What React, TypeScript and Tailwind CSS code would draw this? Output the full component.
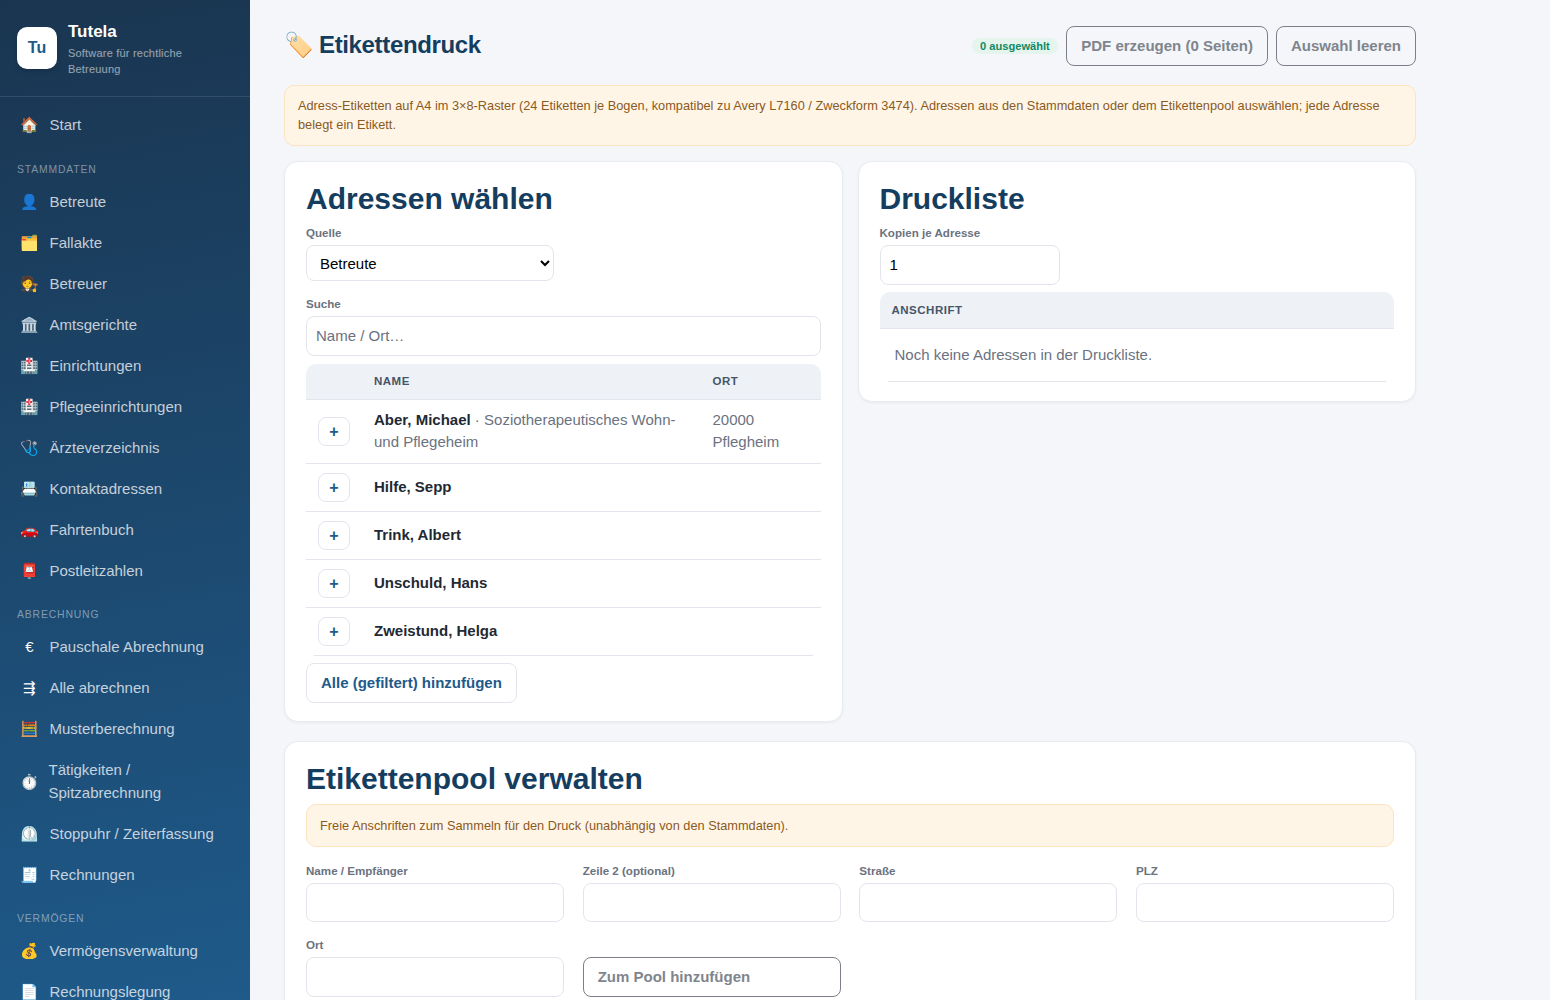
import React from "react";

type NavItem = { icon: string; label: string };
type NavGroup = { title?: string; items: NavItem[] };

const navGroups: NavGroup[] = [
  { items: [{ icon: "🏠", label: "Start" }] },
  {
    title: "Stammdaten",
    items: [
      { icon: "👤", label: "Betreute" },
      { icon: "🗂️", label: "Fallakte" },
      { icon: "🧑‍⚖️", label: "Betreuer" },
      { icon: "🏛️", label: "Amtsgerichte" },
      { icon: "🏥", label: "Einrichtungen" },
      { icon: "🏥", label: "Pflegeeinrichtungen" },
      { icon: "🩺", label: "Ärzteverzeichnis" },
      { icon: "📇", label: "Kontaktadressen" },
      { icon: "🚗", label: "Fahrtenbuch" },
      { icon: "📮", label: "Postleitzahlen" },
    ],
  },
  {
    title: "Abrechnung",
    items: [
      { icon: "€", label: "Pauschale Abrechnung" },
      { icon: "⇶", label: "Alle abrechnen" },
      { icon: "🧮", label: "Musterberechnung" },
      { icon: "⏱️", label: "Tätigkeiten / Spitzabrechnung" },
      { icon: "⏲️", label: "Stoppuhr / Zeiterfassung" },
      { icon: "🧾", label: "Rechnungen" },
    ],
  },
  {
    title: "Vermögen",
    items: [
      { icon: "💰", label: "Vermögensverwaltung" },
      { icon: "📄", label: "Rechnungslegung" },
    ],
  },
];

const addresses = ["Hilfe, Sepp", "Trink, Albert", "Unschuld, Hans", "Zweistund, Helga"];

const Sidebar = () => (
  <aside className="w-[250px] shrink-0 h-screen overflow-hidden bg-[linear-gradient(170deg,#1a3550,#1e5a8a)]">
    <div className="flex items-center gap-[11px] px-[17px] pt-[21px] pb-[19px] border-b border-white/10">
      <div className="w-[40px] h-[42px] mb-[2px] shrink-0 rounded-[10px] bg-white flex items-center justify-center text-[16px] font-bold text-[#1e5a8a] shadow-md">
        Tu
      </div>
      <div>
        <div className="text-[17px] leading-[22px] font-bold text-white">Tutela</div>
        <div className="text-[11px] leading-[16px] mt-[2px] text-white/55 tracking-[0.2px]">
          Software für rechtliche Betreuung
        </div>
      </div>
    </div>
    <nav className="pt-[7px]">
      {navGroups.map((group, i) => (
        <div key={i} className={i === 0 ? "pb-[1px]" : ""}>
          {group.title && (
            <div className="px-[17px] pt-[15px] pb-[3px] text-[10.4px] leading-[17px] uppercase tracking-[0.85px] text-white/45">
              {group.title}
            </div>
          )}
          {group.items.map((item) => (
            <div
              key={item.label}
              className="flex items-center gap-[10px] mx-[8px] pl-[11.5px] pr-[14px] py-[9px] text-[15px] leading-[23px]"
            >
              <span className="w-[20px] text-center text-[15px] text-white">{item.icon}</span>
              <span className="text-white/75">{item.label}</span>
            </div>
          ))}
        </div>
      ))}
    </nav>
  </aside>
);

const Label = ({ children }: { children: React.ReactNode }) => (
  <label className="block text-[11.6px] leading-[18px] font-bold text-[#6b7280]">{children}</label>
);

const Notice = ({ className, children }: { className?: string; children: React.ReactNode }) => (
  <div
    className={
      "rounded-[10px] border border-[#fde3c0] bg-[#fff5e6] px-[13px] text-[12.78px] leading-[19px] text-[#8a5a1e] " +
      (className ?? "")
    }
  >
    {children}
  </div>
);

const Card = ({ className, children }: { className?: string; children: React.ReactNode }) => (
  <section
    className={
      "rounded-[14px] border border-[#e8ebf0] bg-white px-[21px] pt-[19px] shadow-[0_1px_3px_rgba(0,0,0,0.05)] " +
      (className ?? "")
    }
  >
    {children}
  </section>
);

const H2 = ({ children }: { children: React.ReactNode }) => (
  <h2 className="text-[30px] leading-[36px] font-bold text-[#143d60]">{children}</h2>
);

const AddButton = () => (
  <button className="w-[32px] h-[29px] pt-[2px] rounded-[8px] border border-[#e2e6ec] bg-white text-[16px] leading-none font-bold text-[#1e5a8a]">
    +
  </button>
);

const TextInput = ({ className, ...rest }: React.InputHTMLAttributes<HTMLInputElement>) => (
  <input
    {...rest}
    className={
      "block w-full rounded-[8px] border border-[#e2e6ec] bg-white px-[9px] pb-[2px] text-[15px] text-black placeholder:text-[#6b7280] " +
      (className ?? "")
    }
  />
);

const GhostButton = ({ className, children }: { className?: string; children: React.ReactNode }) => (
  <button
    className={
      "h-[40px] rounded-[8px] border border-[#7b8088] px-[14px] text-[15px] font-bold text-[#7f858d] " +
      (className ?? "")
    }
  >
    {children}
  </button>
);

export default function App() {
  return (
    <div className="flex h-screen overflow-hidden bg-[#f4f6fa] font-['Liberation_Sans',Arial,sans-serif]">
      <Sidebar />
      <main className="w-[1200px] px-[34px] pt-[26px]">
        <header className="flex items-center justify-between h-[40px]">
          <h1 className="flex items-center gap-[5px] mb-[2px] text-[24px] font-bold text-[#143d60]">
            <span>🏷️</span>
            <span className="tracking-[-0.35px]">Etikettendruck</span>
          </h1>
          <div className="flex items-center gap-[8px]">
            <span className="mb-[1px] rounded-full bg-[#e6f4ee] px-[8.5px] text-[11.1px] leading-[16px] font-bold text-[#0e8a65]">
              0 ausgewählt
            </span>
            <GhostButton>PDF erzeugen (0 Seiten)</GhostButton>
            <GhostButton>Auswahl leeren</GhostButton>
          </div>
        </header>

        <Notice className="mt-[19px] pt-[10px] pb-[11px]">
          Adress-Etiketten auf A4 im 3×8-Raster (24 Etiketten je Bogen, kompatibel zu Avery L7160 / Zweckform 3474).
          Adressen aus den Stammdaten oder dem Etikettenpool auswählen; jede Adresse belegt ein Etikett.
        </Notice>

        <div className="mt-[15px] grid grid-cols-2 items-start gap-[15px]">
          <Card className="pb-[18px]">
            <H2>Adressen wählen</H2>
            <div className="mt-[7px]">
              <Label>Quelle</Label>
              <select className="mt-[3px] block h-[36px] w-[248px] rounded-[8px] border border-[#e2e6ec] bg-white px-[9px] text-[15px] text-black">
                <option>Betreute</option>
              </select>
            </div>
            <div className="mt-[14px]">
              <Label>Suche</Label>
              <TextInput className="mt-[3px] h-[40px]" placeholder="Name / Ort…" />
            </div>
            <table className="mt-[8px] w-full border-collapse text-[15px] leading-[22px]">
              <thead>
                <tr className="h-[35px] border-b border-[#e2e6ec] bg-[#eef1f6] text-left text-[11.5px] font-bold tracking-[0.5px] uppercase text-[#475569]">
                  <th className="w-[68px] rounded-tl-[10px]"></th>
                  <th className="w-[338.5px]">Name</th>
                  <th className="rounded-tr-[10px]">Ort</th>
                </tr>
              </thead>
              <tbody>
                <tr className="h-[64px] border-b border-[#e2e6ec]">
                  <td className="pl-[12px]"><AddButton /></td>
                  <td className="pr-[20px] text-[#6b7280]">
                    <strong className="font-bold text-[#1f2933]">Aber, Michael</strong> · Soziotherapeutisches Wohn- und Pflegeheim
                  </td>
                  <td className="text-[#6b7280]">20000 Pflegheim</td>
                </tr>
                {addresses.map((name, i) => (
                  <tr key={name} className={"h-[48px] " + (i < 3 ? "border-b border-[#e2e6ec]" : "")}>
                    <td className="pl-[12px]"><AddButton /></td>
                    <td className="font-bold text-[#1f2933]">{name}</td>
                    <td></td>
                  </tr>
                ))}
              </tbody>
            </table>
            <div className="mx-[8px] border-t border-[#e2e6ec]"></div>
            <button className="mt-[7px] block h-[40px] rounded-[8px] border border-[#e2e6ec] bg-white px-[14px] text-[15px] font-bold text-[#1e5a8a]">
              Alle (gefiltert) hinzufügen
            </button>
          </Card>

          <Card className="pb-[19px]">
            <H2>Druckliste</H2>
            <div className="mt-[7px]">
              <Label>Kopien je Adresse</Label>
              <div className="mt-[3px] w-[180px]">
                <TextInput className="h-[40px]" defaultValue="1" />
              </div>
            </div>
            <div className="mt-[7px] h-[37px] rounded-t-[10px] border-b border-[#e2e6ec] bg-[#eef1f6] px-[12px] text-[11.5px] leading-[36px] font-bold tracking-[0.5px] text-[#475569]">
              ANSCHRIFT
            </div>
            <div className="px-[15px] py-[15px] text-[15px] leading-[22px] text-[#6b7280]">
              Noch keine Adressen in der Druckliste.
            </div>
            <div className="mx-[8px] border-t border-[#e2e6ec]"></div>
          </Card>
        </div>

        <Card className="mt-[19px] pb-[21px]">
          <H2>Etikettenpool verwalten</H2>
          <Notice className="py-[11px] mt-[7px]">
            Freie Anschriften zum Sammeln für den Druck (unabhängig von den Stammdaten).
          </Notice>
          <div className="mt-[15px] grid grid-cols-4 gap-x-[18.67px] gap-y-[14px]">
            {["Name / Empfänger", "Zeile 2 (optional)", "Straße", "PLZ"].map((l) => (
              <div key={l}>
                <Label>{l}</Label>
                <TextInput className="mt-[3px] h-[39px]" />
              </div>
            ))}
            <div>
              <Label>Ort</Label>
              <TextInput className="mt-[3px] h-[40px]" />
            </div>
            <div className="flex items-end">
              <GhostButton className="w-full text-left">Zum Pool hinzufügen</GhostButton>
            </div>
          </div>
        </Card>
      </main>
    </div>
  );
}
